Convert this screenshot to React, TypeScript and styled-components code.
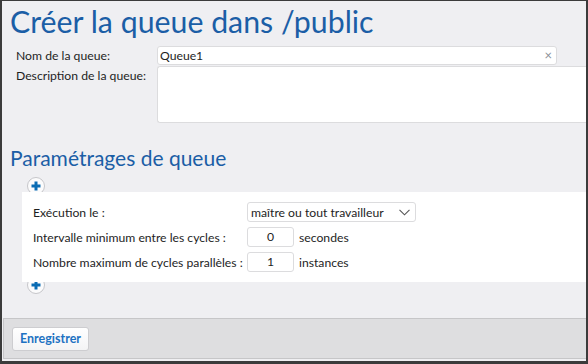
import styled, { createGlobalStyle } from 'styled-components';

const GlobalStyle = createGlobalStyle`
  html, body {
    margin: 0;
    padding: 0;
    background: #3b3b3b;
  }
  * {
    box-sizing: border-box;
  }
`;

const Window = styled.div`
  width: 588px;
  height: 364px;
  border-style: solid;
  border-color: #3b3b3b;
  border-width: 1px 2px 3px 2px;
  background: #efeff2;
  display: flex;
  flex-direction: column;
  font-family: Lato, "Noto Sans", sans-serif;
  font-size: 12.2px;
  color: #1e1e1e;
  overflow: hidden;
`;

const Title = styled.h1`
  margin: 2px 0 0 8px;
  font-weight: 400;
  font-size: 30.3px;
  line-height: 36px;
  color: #1b5ea6;
`;

const NameForm = styled.div`
  display: grid;
  grid-template-columns: 141px 1fr;
  row-gap: 1px;
  margin: 7px 0 0 14px;
`;

const FieldLabel = styled.label`
  line-height: 19px;
  white-space: nowrap;
`;

const InputWrap = styled.div<{ $right: number }>`
  position: relative;
  margin-right: ${p => p.$right}px;
`;

const TextInput = styled.input`
  display: block;
  width: 100%;
  height: 19px;
  border: 1px solid #dcdcde;
  border-radius: 3px;
  background: #fff;
  padding: 0 16px 0 2px;
  font: inherit;
  color: #1e1e1e;
  outline: none;
`;

const ClearMark = styled.span`
  position: absolute;
  right: 5px;
  top: 1px;
  font-size: 13px;
  line-height: 16px;
  color: #8a8f99;
`;

const TextArea = styled.textarea`
  display: block;
  width: 100%;
  height: 57px;
  border: 1px solid #dcdcde;
  border-right: none;
  border-radius: 3px 0 0 3px;
  background: #fff;
  resize: none;
  font: inherit;
  outline: none;
`;

const SectionTitle = styled.h2`
  margin: 23px 0 0 8px;
  font-weight: 400;
  font-size: 21px;
  line-height: 24px;
  color: #1b5ea6;
`;

const PlusButton = styled.button<{ $top: number }>`
  display: flex;
  align-items: center;
  justify-content: center;
  width: 18px;
  height: 18px;
  margin: ${p => p.$top}px 0 0 25px;
  padding: 0;
  border: 1px solid #c6c6ca;
  border-radius: 50%;
  background: #fbfbfc;
  cursor: pointer;
`;

const Panel = styled.div<{ $top: number; $bottom: number }>`
  position: relative;
  z-index: 1;
  margin: ${p => p.$top}px 0 ${p => p.$bottom}px 20px;
  background: #fff;
  padding: 10px 0 10px 11px;
  display: grid;
  grid-template-columns: 214px auto;
  grid-auto-rows: 20px;
  row-gap: 5px;
  align-items: center;
`;

const RowLabel = styled.span`
  line-height: 19px;
  white-space: nowrap;
`;

const RowField = styled.div`
  display: flex;
  align-items: center;
  gap: 5px;
`;

const Select = styled.div`
  display: flex;
  align-items: center;
  justify-content: space-between;
  width: 169px;
  height: 20px;
  border: 1px solid #dcdcde;
  border-radius: 3px;
  padding: 0 5px 0 3px;
  background: #fff;
`;

const NumberBox = styled.div`
  width: 47px;
  height: 20px;
  border: 1px solid #dcdcde;
  border-radius: 3px;
  text-align: center;
  line-height: 18px;
`;

const Footer = styled.div`
  margin: auto 0 2px 1px;
  height: 41px;
  border: 1px solid #c6c6c8;
  border-right: none;
  background: #dedee0;
  display: flex;
  align-items: center;
  padding-left: 8px;
`;

const SaveButton = styled.button`
  height: 24px;
  width: 77px;
  padding: 0;
  border: 1px solid #cdcdd0;
  border-radius: 3px;
  background: linear-gradient(#ffffff, #f4f4f5);
  font-family: Lato, "Noto Sans", sans-serif;
  font-size: 12.5px;
  font-weight: 700;
  color: #1d72c2;
  cursor: pointer;
`;

function Plus() {
  return (
    <svg width="10" height="10" viewBox="0 0 10 10">
      <path d="M5 0.5v9M0.5 5h9" stroke="#0a6cb4" strokeWidth="3" />
    </svg>
  );
}

function Chevron() {
  return (
    <svg width="11" height="7" viewBox="0 0 11 7">
      <path d="M0.5 0.8l5 5 5-5" fill="none" stroke="#555" strokeWidth="1.1" />
    </svg>
  );
}

export default function App() {
  return (
    <Window>
      <GlobalStyle />
      <Title>Créer la queue dans /public</Title>
      <NameForm>
        <FieldLabel>Nom de la queue:</FieldLabel>
        <InputWrap $right={29}>
          <TextInput defaultValue="Queue1" />
          <ClearMark>×</ClearMark>
        </InputWrap>
        <FieldLabel>Description de la queue:</FieldLabel>
        <InputWrap $right={0}>
          <TextArea />
        </InputWrap>
      </NameForm>
      <SectionTitle>Paramétrages de queue</SectionTitle>
      <PlusButton $top={7}><Plus /></PlusButton>
      <Panel $top={-3} $bottom={-6}>
        <RowLabel>Exécution le :</RowLabel>
        <RowField>
          <Select>
            <span>maître ou tout travailleur</span>
            <Chevron />
          </Select>
        </RowField>
        <RowLabel>Intervalle minimum entre les cycles :</RowLabel>
        <RowField>
          <NumberBox>0</NumberBox>
          <span>secondes</span>
        </RowField>
        <RowLabel>Nombre maximum de cycles parallèles :</RowLabel>
        <RowField>
          <NumberBox>1</NumberBox>
          <span>instances</span>
        </RowField>
      </Panel>
      <PlusButton $top={0}><Plus /></PlusButton>
      <Footer>
        <SaveButton>Enregistrer</SaveButton>
      </Footer>
    </Window>
  );
}
